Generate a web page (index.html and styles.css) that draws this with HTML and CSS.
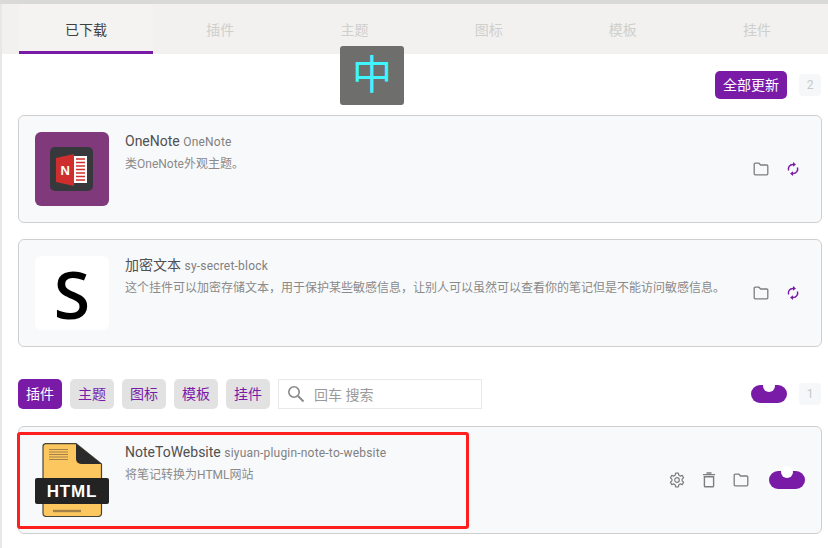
FILE: index.html
```html
<!DOCTYPE html>
<html lang="zh">
<head>
<meta charset="utf-8">
<title>集市</title>
<link rel="stylesheet" href="styles.css">
</head>
<body>
<div class="strip"></div>
<nav class="tabs">
  <div class="tab active">已下载</div>
  <div class="tab">插件</div>
  <div class="tab">主题</div>
  <div class="tab">图标</div>
  <div class="tab">模板</div>
  <div class="tab">挂件</div>
</nav>
<main class="content">
  <div class="bar bar-top">
    <button class="btn primary wide">全部更新</button>
    <span class="count">2</span>
  </div>
  <section class="card">
    <div class="thumb purple">
      <svg width="74" height="74" viewBox="0 0 74 74">
        <rect x="15" y="15" width="43" height="44" rx="5" fill="#37383c"/>
        <rect x="38" y="24" width="14" height="27" fill="#fff"/>
        <path d="M41 27h9M41 30.5h9M41 34h9M41 37.5h9M41 41h9M41 44.5h9M41 48h9" stroke="#ce2f2e" stroke-width="1.5"/>
        <path d="M21 26 L39 22 V54 L21 50 Z" fill="#ce2f2e"/>
        <text x="25.5" y="43" class="note-n">N</text>
      </svg>
    </div>
    <div class="info">
      <div class="title">OneNote <span class="sub">OneNote</span></div>
      <div class="desc">类OneNote外观主题。</div>
    </div>
    <div class="actions">
      <svg class="ico" viewBox="0 0 16 16"><use href="#i-folder"/></svg>
      <svg class="ico sync" viewBox="0 0 16 16"><use href="#i-sync"/></svg>
    </div>
  </section>
  <section class="card">
    <div class="thumb white"><span class="big-s">S</span></div>
    <div class="info">
      <div class="title">加密文本 <span class="sub">sy-secret-block</span></div>
      <div class="desc">这个挂件可以加密存储文本，用于保护某些敏感信息，让别人可以虽然可以查看你的笔记但是不能访问敏感信息。</div>
    </div>
    <div class="actions">
      <svg class="ico" viewBox="0 0 16 16"><use href="#i-folder"/></svg>
      <svg class="ico sync" viewBox="0 0 16 16"><use href="#i-sync"/></svg>
    </div>
  </section>
  <div class="bar bar-filter">
    <button class="btn primary">插件</button>
    <button class="btn">主题</button>
    <button class="btn">图标</button>
    <button class="btn">模板</button>
    <button class="btn">挂件</button>
    <label class="search">
      <svg width="18" height="18" viewBox="0 0 18 18" fill="none" stroke="#8a8a8a"><circle cx="7" cy="7" r="5.2" stroke-width="1.6"/><path d="M11 11l5.5 5.5" stroke-width="2"/></svg>
      <span>回车 搜索</span>
    </label>
    <span class="switch"></span>
    <span class="count">1</span>
  </div>
  <section class="card last">
    <div class="thumb">
      <svg width="74" height="74" viewBox="0 0 74 74">
        <path d="M10.5 0.7 H41 L66.5 21 V70 a3.5 3.5 0 0 1 -3.5 3.5 H11.5 a3.5 3.5 0 0 1 -3.5 -3.5 V3.5 a3 3 0 0 1 2.5 -2.8 Z" fill="#fdc75f" stroke="#4a4436" stroke-width="1.2"/>
        <path d="M41 0.7 L66.5 21 H46 a5 5 0 0 1 -5 -5 Z" fill="#2b2b2b"/>
        <path d="M14 6.5h19M14 9h19M14 11.5h19M14 14h19M14 16.5h19" stroke="#a3824a" stroke-width="1.2"/>
        <path d="M18 68h28" stroke="#a3824a" stroke-width="2.4"/>
        <rect x="0" y="35" width="74" height="26" rx="2" fill="#232323"/>
        <text x="37" y="54" class="html-label">HTML</text>
      </svg>
    </div>
    <div class="info">
      <div class="title">NoteToWebsite <span class="sub">siyuan-plugin-note-to-website</span></div>
      <div class="desc">将笔记转换为HTML网站</div>
    </div>
    <div class="actions wide-gap">
      <svg class="ico" viewBox="0 0 16 16"><use href="#i-gear"/></svg>
      <svg class="ico" viewBox="0 0 16 16"><use href="#i-trash"/></svg>
      <svg class="ico" viewBox="0 0 16 16"><use href="#i-folder"/></svg>
      <span class="switch"></span>
    </div>
  </section>
</main>
<div class="ime">中</div>
<div class="highlight"></div>
<svg class="defs" width="0" height="0">
  <defs>
    <g id="i-folder" fill="none" stroke="currentColor" stroke-width="1.3" stroke-linejoin="round">
      <path d="M1.2 3.2 a1 1 0 0 1 1 -1 H6 L7.6 4 H13.8 a1 1 0 0 1 1 1 V12.8 a1 1 0 0 1 -1 1 H2.2 a1 1 0 0 1 -1 -1 Z"/>
    </g>
    <g id="i-sync" fill="none" stroke="currentColor" stroke-width="1.5">
      <path d="M3.6 9.6 A4.6 4.6 0 0 1 8 3.4"/>
      <path d="M12.4 6.4 A4.6 4.6 0 0 1 8 12.6"/>
      <path d="M8 1 L11 3.4 L8 5.8 Z" fill="currentColor" stroke="none"/>
      <path d="M8 15 L5 12.6 L8 10.2 Z" fill="currentColor" stroke="none"/>
    </g>
    <g id="i-gear" fill="none" stroke="currentColor" stroke-width="1.2" stroke-linejoin="round">
      <path d="M6.6 1.2 h2.8 l.4 2 1.5.9 1.9-.7 1.4 2.4-1.5 1.3 v1.8 l1.5 1.3-1.4 2.4-1.9-.7-1.5.9-.4 2 H6.6 l-.4-2-1.5-.9-1.9.7-1.4-2.4 1.5-1.3 V7.1 L1.4 5.8 2.8 3.4 l1.9.7 1.5-.9 Z"/>
      <circle cx="8" cy="8" r="2.3"/>
    </g>
    <g id="i-trash" fill="none" stroke="currentColor" stroke-width="1.4">
      <path d="M3.4 4.8 h9.2 V14 a.8.8 0 0 1 -.8.8 H4.2 a.8.8 0 0 1 -.8 -.8 Z"/>
      <path d="M2 2.6 h12 M5.5 1 h5" />
    </g>
  </defs>
</svg>
</body>
</html>
```
FILE: styles.css
```css
* { box-sizing: border-box; }
html, body { margin: 0; padding: 0; }
body {
  position: relative;
  width: 828px;
  height: 548px;
  overflow: hidden;
  background: #fff;
  font-family: Roboto, "Noto Sans CJK SC", sans-serif;
  color: #3f3f3f;
}
.strip { height: 4px; background: #d9d9d7; }
.tabs {
  display: flex;
  height: 50px;
  padding-left: 19px;
  background: #f2f1ef;
  box-shadow: inset 2px 0 0 #e6e7e8;
}
.tab {
  width: 134.2px;
  padding-top: 17px;
  text-align: center;
  font-size: 14px;
  line-height: 18px;
  color: #cfcfcd;
}
.tab.active {
  color: #3f3f3f;
  background: #f4f3f1;
  border-bottom: 3px solid #7a1ba8;
}
.content {
  height: 494px;
  padding: 0 6px 0 18px;
  box-shadow: inset 2px 0 0 #e6e7e8;
}
.bar { display: flex; align-items: center; }
.bar-top { height: 61px; justify-content: flex-end; }
.btn {
  width: 44px;
  height: 30px;
  margin-right: 12px;
  padding: 0;
  border: 0;
  border-radius: 5px;
  background: #e2e2e2;
  color: #7a1ba8;
  font-family: inherit;
  font-size: 14px;
  line-height: 30px;
}
.btn.primary { background: #7a1ba8; color: #fff; }
.btn.wide { width: 72px; height: 28px; line-height: 28px; }
.count {
  width: 22px;
  height: 22px;
  margin-right: 1px;
  border-radius: 4px;
  background: #f6f7f9;
  color: #c8c8c8;
  font-size: 12px;
  line-height: 22px;
  text-align: center;
}
.card {
  display: flex;
  align-items: flex-start;
  height: 108px;
  margin-bottom: 16px;
  padding: 16px;
  border: 1px solid #cfcfcf;
  border-radius: 6px;
  background: #f8f9fb;
}
.card.last { margin-bottom: 0; }
.thumb {
  flex: none;
  width: 74px;
  height: 74px;
  margin-right: 16px;
  border-radius: 6px;
}
.thumb svg { display: block; }
.purple { background: #80397b; }
.white {
  display: flex;
  align-items: center;
  justify-content: center;
  background: #fff;
}
.big-s {
  font-family: "Open Sans", sans-serif;
  font-size: 66px;
  font-weight: 600;
  line-height: 70px;
  color: #000;
}
.note-n { font-family: "Liberation Sans", sans-serif; font-size: 13px; font-weight: 700; fill: #fff; }
.html-label {
  font-family: "Liberation Sans", sans-serif;
  font-size: 17px;
  font-weight: 700;
  letter-spacing: 0.8px;
  fill: #fff;
  text-anchor: middle;
}
.info { flex: 1; min-width: 0; margin-top: -1px; }
.title { height: 20px; font-size: 14px; line-height: 20px; color: #505050; }
.sub { font-size: 12px; letter-spacing: 0.2px; color: #808080; }
.desc { margin-top: 4px; font-size: 12px; line-height: 18px; color: #8a8a8a; }
.actions {
  display: flex;
  align-items: center;
  align-self: center;
  flex: none;
  gap: 16px;
  margin-right: 4px;
}
.wide-gap { margin-right: 0; }
.wide-gap .switch { margin-left: 4px; }
.ico { width: 16px; height: 16px; color: #7e7e7e; }
.ico.sync { color: #7a1ba8; }
.bar-filter { height: 30px; margin-top: 32px; margin-bottom: 17px; }
.bar-filter .btn { margin-right: 8px; }
.search {
  display: flex;
  align-items: center;
  width: 204px;
  height: 30px;
  padding-left: 8px;
  border: 1px solid #e8e8e8;
  color: #9a9a9a;
  font-size: 14px;
}
.search span { margin-left: 9px; }
.switch {
  position: relative;
  flex: none;
  width: 36px;
  height: 18px;
  border-radius: 9px;
  background: #7a1ba8;
}
.switch::after {
  content: "";
  position: absolute;
  left: 12px;
  top: -5px;
  width: 12px;
  height: 12px;
  border-radius: 50%;
  background: #fff;
}
.bar-filter .switch { margin-left: auto; margin-right: 12px; }
.ime {
  position: absolute;
  left: 340px;
  top: 46px;
  width: 64px;
  height: 59px;
  border-radius: 3px;
  background: #6e6f6d;
  color: #3ff5ff;
  font-size: 40px;
  line-height: 59px;
  text-align: center;
}
.highlight {
  position: absolute;
  left: 17px;
  top: 432px;
  width: 452px;
  height: 97px;
  border: 3px solid #ff1f1f;
  border-radius: 3px;
}
.defs { position: absolute; }
```
